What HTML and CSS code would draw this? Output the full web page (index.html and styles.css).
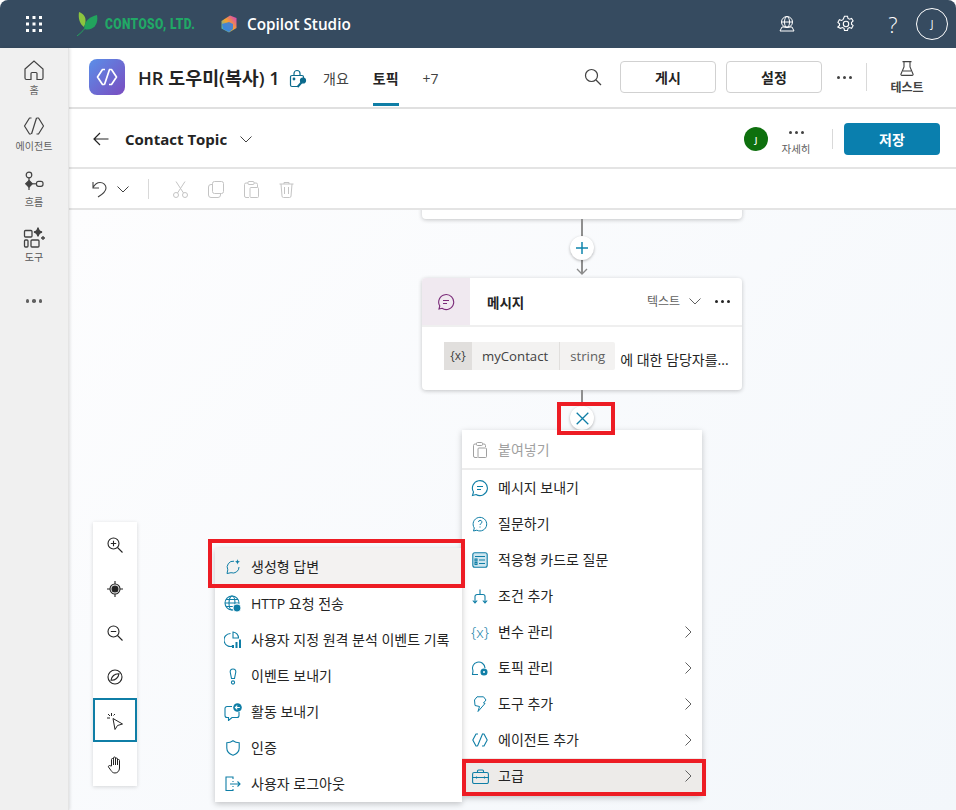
FILE: index.html
```html
<!DOCTYPE html>
<html lang="ko">
<head>
<meta charset="utf-8">
<title>Copilot Studio</title>
<link rel="stylesheet" href="styles.css">
</head>
<body>
<div class="app">
  <header class="topbar">
    <span class="waffle"><svg width="18" height="18" viewBox="0 0 18 18" fill="#fff"><rect x="1" y="1" width="3" height="3"/><rect x="7.5" y="1" width="3" height="3"/><rect x="14" y="1" width="3" height="3"/><rect x="1" y="7.5" width="3" height="3"/><rect x="7.5" y="7.5" width="3" height="3"/><rect x="14" y="7.5" width="3" height="3"/><rect x="1" y="14" width="3" height="3"/><rect x="7.5" y="14" width="3" height="3"/><rect x="14" y="14" width="3" height="3"/></svg></span>
    <span class="brand">
      <svg width="21" height="24" viewBox="0 0 21 24"><path d="M2 0c5 2 7 5 6.500 10-.2 2-.8 3.500-1.500 5C3 12 1 7 2 0z" fill="#8cc63f"/><path d="M20 3c1.500 8-2 14-9.500 14.500-2 .1-3-.5-3.300-2C8 8 13 5 20 3z" fill="#22a45d"/><path d="M0 24c4-3 8-7 12-13" stroke="#22a45d" stroke-width="1" fill="none"/></svg>
      <span class="brand-name">CONTOSO, LTD.</span>
    </span>
    <span class="product">
      <svg width="18" height="18" viewBox="0 0 18 18"><defs><linearGradient id="cs" x1="0" y1="1" x2="1" y2="0"><stop offset="0" stop-color="#19c3d6"/><stop offset=".5" stop-color="#f7a32b"/><stop offset="1" stop-color="#d23bc8"/></linearGradient></defs><path d="M10 .5l6.500 2.500v10l-7.500 4.500-7.500-4V6z" fill="url(#cs)"/><path d="M2 9l7-2 4 2v5l-4 3-6-3z" fill="#2f7fe6" opacity=".85"/></svg>
      <span class="product-name">Copilot Studio</span>
    </span>
    <span class="spacer"></span>
    <span class="top-icons">
      <svg class="ico-env" width="18" height="18" viewBox="0 0 18 18" fill="none" stroke="#fff" stroke-width="1"><circle cx="9" cy="7" r="5.500"/><ellipse cx="9" cy="7" rx="2.500" ry="5.500"/><path d="M3.500 7h11M2 16l2-4h10l2 4z"/></svg>
      <svg class="ico-gear" width="18" height="18" viewBox="0 0 18 18" fill="none" stroke="#fff" stroke-width="1.100"><circle cx="9" cy="9" r="2.700"/><path d="M7.500 1.200h3l.5 2.200 1.500.8 2.100-.8 1.500 2.600-1.600 1.500v1.700l1.600 1.500-1.500 2.600-2.100-.8-1.500.8-.5 2.200h-3l-.5-2.200-1.500-.8-2.100.8L.9 12l1.600-1.500V8.800L.9 7.300l1.500-2.600 2.100.8 1.500-.8z"/></svg>
      <span class="help">?</span>
      <span class="me">J</span>
    </span>
  </header>
  <div class="body">
    <nav class="rail">
      <a class="rail-item">
        <svg width="22" height="22" viewBox="0 0 22 22" fill="none" stroke="#424242" stroke-width="1.200"><path d="M2 10l9-8 9 8v9a1.500 1.500 0 0 1-1.500 1.500H14v-6a1 1 0 0 0-1-1H9a1 1 0 0 0-1 1v6H3.500A1.500 1.500 0 0 1 2 19z"/></svg>
        <span>홈</span>
      </a>
      <a class="rail-item">
        <svg width="22" height="22" viewBox="0 0 22 22" fill="none" stroke="#424242" stroke-width="1.200" stroke-linejoin="round"><path d="M8.500 3H6.500L1.500 11l5 8h1.500M13.500 3h2l5 8-5 8h-2M13.500 3L8.500 19"/></svg>
        <span>에이전트</span>
      </a>
      <a class="rail-item">
        <svg width="22" height="22" viewBox="0 0 22 22" fill="none" stroke="#424242" stroke-width="1.200"><circle cx="6" cy="4" r="2.800"/><path d="M6 6.800v3M6 16v3"/><path d="M6 9.500l3.300 3.300L6 16.100l-3.300-3.300z" fill="#424242"/><path d="M9.300 12.800h4.200"/><rect x="13.500" y="10.300" width="6.500" height="5" rx="2"/></svg>
        <span>흐름</span>
      </a>
      <a class="rail-item">
        <svg width="22" height="22" viewBox="0 0 22 22" fill="none" stroke="#424242" stroke-width="1.300"><rect x="1.500" y="3.500" width="7.500" height="6.500" rx="1"/><rect x="1.500" y="13" width="3.500" height="7" rx="1"/><rect x="8" y="13" width="8" height="7" rx="1"/><path d="M15 .5c.5 3 1.500 4 4 4.500-2.500.5-3.500 1.500-4 4.500-.5-3-1.500-4-4-4.500 2.500-.5 3.500-1.500 4-4.500z" fill="#424242"/><path d="M20 9v4M18 11h4"/></svg>
        <span class="tools-label">도구</span>
      </a>
      <span class="rail-more"><i></i><i></i><i></i></span>
    </nav>
    <main class="main">
      <div class="agentbar">
        <span class="agent-logo"><svg width="22" height="18" viewBox="0 0 22 18" fill="none" stroke="#fff" stroke-width="1.700" stroke-linejoin="round"><path d="M9 1.500H6.500L1.500 9l5 7.500H8.500M13 1.500h2.500L20.500 9l-5 7.500H13M13.500 1.500L8.500 16.500"/></svg></span>
        <span class="agent-name">HR 도우미(복사) 1</span>
        <svg class="lock" width="18" height="20" viewBox="0 0 18 20" fill="none" stroke="#0b6a8c" stroke-width="1.200"><path d="M5 6.500V4.500a3 3 0 0 1 6 0v2"/><path d="M9 17.500H3a1.500 1.500 0 0 1-1.500-1.500V8A1.500 1.500 0 0 1 3 6.500h10A1.500 1.500 0 0 1 14.500 8v2"/><circle cx="5" cy="10" r=".8" fill="#0b6a8c"/><circle cx="14" cy="11.500" r="2.500" fill="#0b6a8c"/><path d="M12.500 13.500L8.500 18" stroke-width="2"/></svg>
        <div class="tabs">
          <span class="tab">개요</span>
          <span class="tab tab-on">토픽</span>
          <span class="tab tab-more">+7</span>
        </div>
        <span class="spacer"></span>
        <svg class="search" width="18" height="18" viewBox="0 0 18 18" fill="none" stroke="#424242" stroke-width="1.200"><circle cx="7.500" cy="7.500" r="6"/><path d="M12 12l5 5"/></svg>
        <button class="btn">게시</button>
        <button class="btn">설정</button>
        <span class="dots dots-top"><i></i><i></i><i></i></span>
        <span class="vsep vsep-top"></span>
        <span class="testbtn">
          <svg width="14" height="15" viewBox="0 0 14 15" fill="none" stroke="#424242" stroke-width="1.100"><path d="M2.500 .6h9M4 .6v5.400L1 13a1 1 0 0 0 1 1.400h10a1 1 0 0 0 1-1.400L10 6V.6M3 10h8"/></svg>
          <span>테스트</span>
        </span>
      </div>
      <div class="topicbar">
        <svg class="back" width="16" height="14" viewBox="0 0 16 14" fill="none" stroke="#242424" stroke-width="1.200"><path d="M15.500 7H1M7 1L1 7l6 6"/></svg>
        <span class="topic-name">Contact Topic</span>
        <svg class="chev-topic" width="12" height="7" viewBox="0 0 12 7" fill="none" stroke="#424242" stroke-width="1"><path d="M.5.500L6 6 11.500.500"/></svg>
        <span class="spacer"></span>
        <span class="avatar">J</span>
        <span class="more">
          <span class="dots"><i></i><i></i><i></i></span>
          <span class="more-label">자세히</span>
        </span>
        <span class="vsep vsep-sub"></span>
        <button class="save">저장</button>
      </div>
      <div class="toolbar">
        <svg class="tb-undo" width="16" height="17" viewBox="0 0 16 17" fill="none" stroke="#424242" stroke-width="1.100"><path d="M1 1v6h6M1 6.500C3 3 5 1.500 8 1.500c3.500 0 6 2.500 6 5.500 0 3-3 6-8 9"/></svg>
        <svg class="tb-chev" width="12" height="7" viewBox="0 0 12 7" fill="none" stroke="#424242" stroke-width="1"><path d="M.5.500L6 6 11.500.500"/></svg>
        <span class="vsep vsep-tb"></span>
        <svg class="tb-off" width="15" height="17" viewBox="0 0 15 17" fill="none" stroke="#c4c4c4" stroke-width="1"><path d="M3 .500l7.500 11.500M12 .500L4.500 12"/><circle cx="3" cy="14" r="2.500"/><circle cx="12" cy="14" r="2.500"/></svg>
        <svg class="tb-off" width="16" height="17" viewBox="0 0 16 17" fill="none" stroke="#c4c4c4" stroke-width="1"><rect x="4.500" y=".5" width="11" height="12" rx="2"/><path d="M4.500 3.500H3A2.500 2.500 0 0 0 .5 6v8A2.500 2.500 0 0 0 3 16.500h7a2.500 2.500 0 0 0 2.500-2.500v-1"/></svg>
        <svg class="tb-off" width="15" height="17" viewBox="0 0 15 17" fill="none" stroke="#c4c4c4" stroke-width="1"><rect x="4" y=".5" width="6" height="3" rx="1"/><path d="M4 2H2A1.500 1.500 0 0 0 .5 3.500v11.500A1.500 1.500 0 0 0 2 16.500h3M10 2h2a1.500 1.500 0 0 1 1.500 1.500V6"/><rect x="6" y="6.500" width="8.500" height="10" rx="1"/></svg>
        <svg class="tb-off" width="15" height="17" viewBox="0 0 15 17" fill="none" stroke="#c4c4c4" stroke-width="1"><path d="M.5 3h14M5 3V1.500h5V3M2 3l1 12a1.500 1.500 0 0 0 1.500 1.500h6A1.500 1.500 0 0 0 12 15l1-12M5.500 6v7M9.500 6v7"/></svg>
      </div>
      <section class="canvas">
        <div class="node node-prev"></div>
        <span class="wire wire-a"></span>
        <svg class="arrowhead" width="12" height="8" viewBox="0 0 12 8" fill="none" stroke="#8a8a8a" stroke-width="1.300"><path d="M1 1l5 5 5-5"/></svg>
        <span class="round round-plus"><svg width="14" height="14" viewBox="0 0 14 14" fill="none" stroke="#0f85ad" stroke-width="1.500"><path d="M7 1v12M1 7h12"/></svg></span>
        <div class="node node-msg">
          <div class="node-head">
            <span class="node-ico"><svg width="18" height="18" viewBox="0 0 18 18" fill="none" stroke="#7a2a78" stroke-width="1.100"><path d="M2 16l.8-3A7.500 7.500 0 1 1 5 15.300z"/><path d="M6 7.500h6M6 10.500h4"/></svg></span>
            <span class="node-title">메시지</span>
            <span class="spacer"></span>
            <span class="node-type">텍스트</span>
            <svg class="node-chev" width="12" height="7" viewBox="0 0 12 7" fill="none" stroke="#616161" stroke-width="1"><path d="M.5.500L6 6l5.500-5.500"/></svg>
            <span class="dots dots-dark"><i></i><i></i><i></i></span>
          </div>
          <div class="node-body">
            <span class="chip"><span class="chip-x">{x}</span><span class="chip-name">myContact</span><span class="chip-type">string</span></span>
            <span class="node-text">에 대한 담당자를...</span>
          </div>
        </div>
        <span class="wire wire-b"></span>
        <span class="round round-x"><svg width="13" height="13" viewBox="0 0 13 13" fill="none" stroke="#0f7ea6" stroke-width="1.300"><path d="M.7.700l11.600 11.600M12.300.700L.7 12.300"/></svg></span>

        <div class="zoomer">
          <span class="z-item"><svg width="16" height="16" viewBox="0 0 16 16" fill="none" stroke="#242424" stroke-width="1.100"><circle cx="6.500" cy="6.500" r="5.500"/><path d="M10.500 10.500L15.500 15.500M3.800 6.500h5.400M6.500 3.800v5.400"/></svg></span>
          <span class="z-item"><svg width="16" height="16" viewBox="0 0 16 16" fill="none" stroke="#242424" stroke-width="1.100"><circle cx="8" cy="8" r="5"/><circle cx="8" cy="8" r="3" fill="#242424"/><path d="M8 0v3M8 13v3M0 8h3M13 8h3"/></svg></span>
          <span class="z-item"><svg width="16" height="16" viewBox="0 0 16 16" fill="none" stroke="#242424" stroke-width="1.100"><circle cx="6.500" cy="6.500" r="5.500"/><path d="M10.500 10.500L15.500 15.500M3.800 6.500h5.400"/></svg></span>
          <span class="z-item"><svg width="16" height="16" viewBox="0 0 16 16" fill="none" stroke="#242424" stroke-width="1.100"><circle cx="8" cy="8" r="7"/><path d="M4 11.200C4.500 7.500 7.500 4.500 12 4.800 11.500 8.500 8.500 11.500 4 11.200z"/></svg></span>
          <span class="z-item z-on"><svg width="18" height="18" viewBox="0 0 18 18" fill="none" stroke="#242424" stroke-width="1"><path d="M7 6.500l9.500 5.500-5 1.500-2.500 4z"/><path d="M5.500 1v3M1 6h3M2 2l2 2M9 2L7.500 3.500"/></svg></span>
          <span class="z-item"><svg width="16" height="18" viewBox="0 0 16 18" fill="none" stroke="#242424" stroke-width="1"><path d="M4.500 10V3.500a1 1 0 0 1 2 0V2a1 1 0 0 1 2 0v1a1 1 0 0 1 2 0v1.500a1 1 0 0 1 2 0V12c0 3-2 5-4.500 5-2 0-3-1-4-2.500L1.500 11c-.5-1 .8-2 1.700-1.200z"/><path d="M6.500 3.500V9M8.500 3v6M10.500 4v5"/></svg></span>
        </div>

        <div class="menu menu-main">
          <div class="mi mi-paste">
            <span class="mi-ico"><svg width="14" height="16" viewBox="0 0 14 16" fill="none" stroke="#a0a0a0" stroke-width="1"><rect x="3.500" y=".5" width="6" height="3" rx="1"/><path d="M3.500 2H2A1.500 1.500 0 0 0 .5 3.500V14A1.500 1.500 0 0 0 2 15.500h2.500M9.500 2H11a1.500 1.500 0 0 1 1.500 1.500V5"/><rect x="5" y="6" width="8.500" height="9.500" rx="1"/></svg></span>
            <span class="mi-text">붙여넣기</span>
          </div>
          <div class="mi">
            <span class="mi-ico"><svg width="18" height="18" viewBox="0 0 18 18" fill="none" stroke="#0f7ea6" stroke-width="1.100"><path d="M1.500 16.500l1-3.500A7.500 7.500 0 1 1 5 15.500z"/><path d="M6 7.500h6M6 10.500h4"/></svg></span>
            <span class="mi-text">메시지 보내기</span>
          </div>
          <div class="mi">
            <span class="mi-ico"><svg width="16" height="16" viewBox="0 0 16 16" fill="none" stroke="#0f7ea6" stroke-width="1"><path d="M1.500 15l.8-3A6.800 6.800 0 1 1 4.800 14.200z"/><path d="M6.500 6a1.700 1.700 0 1 1 2.400 1.600c-.6.300-.9.700-.9 1.400M8 10.500v1"/></svg></span>
            <span class="mi-text">질문하기</span>
          </div>
          <div class="mi">
            <span class="mi-ico"><svg width="16" height="16" viewBox="0 0 16 16" fill="#cfe6ef" stroke="#0f7ea6" stroke-width="1.100"><rect x=".8" y=".8" width="14.400" height="14.400" rx="2"/><path d="M3 4.500h10M7 8h6M7 11.500h6" fill="none"/><rect x="3" y="7" width="2" height="2"/><rect x="3" y="10.500" width="2" height="2"/></svg></span>
            <span class="mi-text">적응형 카드로 질문</span>
          </div>
          <div class="mi">
            <span class="mi-ico"><svg width="16" height="15" viewBox="0 0 16 15" fill="none" stroke="#0f7ea6" stroke-width="1.100"><path d="M8 .500v5M3 14V7.500a2 2 0 0 1 2-2h6a2 2 0 0 1 2 2V14M.8 11.500L3 14l2.200-2.500M10.800 11.500L13 14l2.200-2.500"/></svg></span>
            <span class="mi-text">조건 추가</span>
          </div>
          <div class="mi">
            <span class="mi-ico ico-var">{x}</span>
            <span class="mi-text">변수 관리</span>
            <svg class="mi-chev" width="7" height="12" viewBox="0 0 7 12" fill="none" stroke="#616161" stroke-width="1"><path d="M.5.500L6 6 .5 11.500"/></svg>
          </div>
          <div class="mi">
            <span class="mi-ico"><svg width="18" height="16" viewBox="0 0 18 16" fill="none" stroke="#0f7ea6" stroke-width="1.100"><path d="M7 14.500H1.500l.5-3.500A6.300 6.300 0 1 1 14 8"/><circle cx="13" cy="12" r="3" fill="#0f7ea6"/><circle cx="13" cy="12" r="1" fill="#fff" stroke="none"/></svg></span>
            <span class="mi-text">토픽 관리</span>
            <svg class="mi-chev" width="7" height="12" viewBox="0 0 7 12" fill="none" stroke="#616161" stroke-width="1"><path d="M.5.500L6 6 .5 11.500"/></svg>
          </div>
          <div class="mi">
            <span class="mi-ico"><svg width="14" height="16" viewBox="0 0 14 16" fill="none" stroke="#0f7ea6" stroke-width="1" stroke-linejoin="round"><path d="M4 .8h6.500L13 4 10.500 7l1.500.5L5 15.500l1.500-5-4.500-1L1.500 4z"/></svg></span>
            <span class="mi-text">도구 추가</span>
            <svg class="mi-chev" width="7" height="12" viewBox="0 0 7 12" fill="none" stroke="#616161" stroke-width="1"><path d="M.5.500L6 6 .5 11.500"/></svg>
          </div>
          <div class="mi">
            <span class="mi-ico"><svg width="16" height="14" viewBox="0 0 16 14" fill="none" stroke="#0f7ea6" stroke-width="1.100" stroke-linejoin="round"><path d="M6 1H4L.8 7 4 13h1.500M10 1h2l3.200 6L12 13h-2M10.500 1L5.500 13"/></svg></span>
            <span class="mi-text">에이전트 추가</span>
            <svg class="mi-chev" width="7" height="12" viewBox="0 0 7 12" fill="none" stroke="#616161" stroke-width="1"><path d="M.5.500L6 6 .5 11.500"/></svg>
          </div>
          <div class="mi mi-adv">
            <span class="mi-ico"><svg width="17" height="15" viewBox="0 0 17 15" fill="none" stroke="#0f7ea6" stroke-width="1.100"><rect x=".6" y="3.500" width="15.800" height="11" rx="1.500"/><path d="M5.500 3.500V2a1 1 0 0 1 1-1h4a1 1 0 0 1 1 1v1.500M.6 8.500h15.800M4.500 7.500v2M12.500 7.500v2"/></svg></span>
            <span class="mi-text">고급</span>
            <svg class="mi-chev" width="7" height="12" viewBox="0 0 7 12" fill="none" stroke="#616161" stroke-width="1"><path d="M.5.500L6 6 .5 11.500"/></svg>
          </div>
        </div>

        <div class="menu menu-sub">
          <div class="mi mi-gen">
            <span class="mi-ico"><svg width="16" height="16" viewBox="0 0 16 16" fill="none" stroke="#0f7ea6" stroke-width="1"><path d="M9 2.200A6 6 0 0 0 2.800 10.800L2 14.500l4-.8A6 6 0 0 0 14 8"/><path d="M12.500 0c.3 1.800 1 2.500 2.800 2.800-1.800.3-2.500 1-2.800 2.800-.3-1.800-1-2.500-2.800-2.800 1.800-.3 2.500-1 2.800-2.800z" fill="#0f7ea6" stroke="none"/></svg></span>
            <span class="mi-text">생성형 답변</span>
          </div>
          <div class="mi">
            <span class="mi-ico"><svg width="18" height="18" viewBox="0 0 18 18" fill="none" stroke="#0f7ea6" stroke-width="1.100"><circle cx="8" cy="8" r="7"/><ellipse cx="8" cy="8" rx="3" ry="7"/><path d="M1 8h14M2 4.500h12M2 11.500h12"/><circle cx="13" cy="13" r="4" fill="#0f7ea6" stroke="#fff"/></svg></span>
            <span class="mi-text">HTTP 요청 전송</span>
          </div>
          <div class="mi">
            <span class="mi-ico"><svg width="18" height="18" viewBox="0 0 18 18" fill="none" stroke="#0f7ea6" stroke-width="1.100"><path d="M6.500 2.500A6.500 6.500 0 1 0 9 15"/><path d="M9 1a6 6 0 0 1 5.500 6H9z"/><path d="M9 17v-3M12.500 17v-6M16 17V8.500" stroke-width="2"/></svg></span>
            <span class="mi-text">사용자 지정 원격 분석 이벤트 기록</span>
          </div>
          <div class="mi">
            <span class="mi-ico"><svg width="8" height="17" viewBox="0 0 8 17" fill="none" stroke="#0f7ea6" stroke-width="1.100"><path d="M4 1C2 1 1 2.200 1.200 4L2.500 10.500h3L6.800 4C7 2.200 6 1 4 1z"/><circle cx="4" cy="14.500" r="1.600"/></svg></span>
            <span class="mi-text">이벤트 보내기</span>
          </div>
          <div class="mi">
            <span class="mi-ico"><svg width="18" height="18" viewBox="0 0 18 18" fill="none" stroke="#0f7ea6" stroke-width="1.100"><path d="M8 3.500H3A2 2 0 0 0 1 5.500v7A2 2 0 0 0 3 14.500h1.500v3l3.500-3h5a2 2 0 0 0 2-2V9"/><circle cx="13.500" cy="4.500" r="4.300" fill="#0f7ea6" stroke="none"/><path d="M15.800 4.500h-4.300M13.300 2.700l-1.900 1.800 1.900 1.800" stroke="#fff"/></svg></span>
            <span class="mi-text">활동 보내기</span>
          </div>
          <div class="mi">
            <span class="mi-ico"><svg width="14" height="16" viewBox="0 0 14 16" fill="none" stroke="#0f7ea6" stroke-width="1.100"><path d="M7 .8c1.800 1.400 3.800 2 6.200 2V8c0 3.500-2.500 6-6.200 7.200C3.300 14 .8 11.500.8 8V2.800c2.400 0 4.400-.6 6.200-2z"/></svg></span>
            <span class="mi-text">인증</span>
          </div>
          <div class="mi">
            <span class="mi-ico"><svg width="16" height="16" viewBox="0 0 16 16" fill="none" stroke="#0f7ea6" stroke-width="1.100"><path d="M8 3V1H1v13.500h7V13"/><path d="M5 8h10M12.500 5.500L15 8l-2.500 2.500M8 5v1M8 10v1"/></svg></span>
            <span class="mi-text">사용자 로그아웃</span>
          </div>
        </div>

        <span class="mark mark-x"></span>
        <span class="mark mark-gen"></span>
        <span class="mark mark-adv"></span>
      </section>
    </main>
  </div>
</div>
</body>
</html>
```

FILE: styles.css
```css
* { box-sizing: border-box; }
html, body { margin: 0; height: 100%; background: #fff; overflow: hidden; }
body { font-family: "Open Sans", "Noto Sans CJK KR", sans-serif; color: #242424; }
.app { width: 956px; height: 810px; display: flex; flex-direction: column; overflow: hidden; background: #fff; }
.spacer { flex: 1; }
svg { display: block; flex: none; }

.topbar { height: 48px; flex: none; background: #364b60; border-radius: 8px 8px 0 0; display: flex; align-items: center; color: #fff; }
.waffle { width: 68px; display: flex; justify-content: center; }
.brand { display: flex; align-items: center; margin-left: 9px; gap: 7px; width: 118px; }
.brand-name { font-family: "Roboto", sans-serif; font-weight: 900; font-size: 15px; letter-spacing: .5px; color: #21a866; white-space: nowrap; transform: scaleX(.8); transform-origin: left center; }
.product { display: flex; align-items: center; margin-left: 25px; gap: 9px; }
.product-name { font-size: 15.300px; font-weight: 600; color: #fff; }
.top-icons { display: flex; align-items: center; }
.ico-env { margin-right: 41px; }
.ico-gear { margin-right: 32px; }
.help { font-size: 22px; font-weight: 300; width: 14px; text-align: center; margin-right: 16px; margin-left: -1px; }
.me { width: 32px; height: 32px; border: 1px solid #fff; border-radius: 50%; display: flex; align-items: center; justify-content: center; font-size: 10px; margin-right: 8px; }

.body { flex: 1; display: flex; min-height: 0; }
.rail { width: 69px; flex: none; background: #f0f0f0; box-shadow: 1px 0 3px rgba(0,0,0,.12); border-right: 1px solid #e4e4e4; display: flex; flex-direction: column; align-items: center; padding-top: 11px; position: relative; z-index: 2; }
.rail-item { height: 56px; display: flex; flex-direction: column; align-items: center; gap: 2px; font-size: 10px; color: #616161; }
.rail-item span { line-height: 14px; }
.tools-label { color: #555; margin-top: -1px; }
.rail-more { display: flex; gap: 3px; margin-top: 16px; }
.rail-more i { width: 3.500px; height: 3.500px; border-radius: 50%; background: #616161; }

.main { flex: 1; min-width: 0; display: flex; flex-direction: column; }
.agentbar { height: 61px; flex: none; border-bottom: 2px solid #e0e0e0; display: flex; align-items: center; padding-left: 20px; padding-bottom: 1px; }
.agent-logo { width: 36px; height: 36px; border-radius: 8px; background: linear-gradient(135deg, #5b8fe8, #7a4cc0); display: flex; align-items: center; justify-content: center; }
.agent-name { font-size: 18.400px; font-weight: 600; margin-left: 13px; white-space: nowrap; width: 141px; }
.lock { margin-left: 10px; margin-top: 4px; }
.tabs { display: flex; align-self: stretch; margin-left: 16px; gap: 24px; }
.tab { font-size: 14px; color: #424242; display: flex; align-items: center; padding-top: 2px; height: 58px; }
.tab-on { font-weight: 700; color: #242424; border-bottom: 3px solid #0f7ea6; padding-top: 5px; }
.search { margin-right: 18px; margin-top: -1px; }
.btn { width: 96px; height: 32px; margin-right: 10px; background: #fff; border: 1px solid #d1d1d1; border-radius: 4px; font: 700 14px "Open Sans", "Noto Sans CJK KR", sans-serif; color: #242424; padding: 0; }
.dots { display: flex; gap: 3px; }
.dots i { width: 3px; height: 3px; border-radius: 50%; background: #424242; }
.dots-top { margin: 0 14px 0 5px; }
.vsep { width: 1px; background: #d9d9d9; flex: none; }
.vsep-top { height: 28px; margin-right: 23px; }
.testbtn { display: flex; flex-direction: column; align-items: center; font-size: 12px; font-weight: 700; color: #424242; margin-right: 32px; gap: 3px; width: 34px; padding-top: 2px; }
.testbtn span { line-height: 17px; white-space: nowrap; }

.topicbar { height: 60px; flex: none; border-bottom: 2px solid #e4e4e4; display: flex; align-items: center; padding: 2px 16px 0 24px; }
.topic-name { font-size: 15px; font-weight: 700; margin-left: 16px; color: #242424; }
.chev-topic { margin-left: 13px; }
.avatar { width: 24px; height: 24px; border-radius: 50%; background: #0e700e; color: #fff; font-size: 9px; font-weight: 600; display: flex; align-items: center; justify-content: center; }
.more { width: 40px; margin-left: 8px; display: flex; flex-direction: column; align-items: center; gap: 8px; padding-top: 9px; }
.more-label { font-size: 10.500px; color: #616161; line-height: 15px; white-space: nowrap; }
.vsep-sub { height: 20px; margin-left: 16px; margin-right: 11px; }
.save { width: 96px; height: 32px; background: #0a7fae; color: #fff; border: 0; border-radius: 4px; font: 700 14px "Open Sans", "Noto Sans CJK KR", sans-serif; padding: 0; }

.toolbar { height: 41px; flex: none; border-bottom: 2px solid #e4e4e4; display: flex; align-items: center; padding: 1px 0 0 23px; }
.tb-chev { margin-left: 9px; }
.vsep-tb { height: 20px; margin-left: 19px; margin-right: 24px; }
.tb-off { margin-right: 20px; }

.canvas { flex: 1; position: relative; background: linear-gradient(135deg, #fdfdfe, #f3f7fb); overflow: hidden; }
.node { position: absolute; left: 353px; width: 320px; background: #fff; border-radius: 4px; box-shadow: 0 1px 4px rgba(0,0,0,.22); }
.node-prev { top: -20px; height: 29px; }
.wire { position: absolute; left: 512px; width: 2px; background: #8f8f8f; }
.wire-a { top: 9px; height: 55px; }
.wire-b { top: 180px; height: 20px; }
.arrowhead { position: absolute; left: 507px; top: 58px; }
.round { position: absolute; left: 501px; width: 24px; height: 24px; border-radius: 50%; background: #fff; box-shadow: 0 1px 3px rgba(0,0,0,.28); display: flex; align-items: center; justify-content: center; }
.round-plus { top: 26px; }
.round-x { top: 196px; }
.node-msg { top: 68px; height: 112px; }
.node-head { height: 49px; border-bottom: 2px solid #efefef; display: flex; align-items: center; padding-right: 12px; }
.node-ico { width: 48px; height: 47px; background: #f0e9f0; border-radius: 4px 0 0 0; display: flex; align-items: center; justify-content: center; }
.node-title { font-size: 13.500px; font-weight: 700; margin-left: 17px; color: #242424; }
.node-type { font-size: 12px; color: #616161; padding-bottom: 2px; }
.node-chev { margin-left: 9px; margin-right: 14px; }
.dots-dark i { background: #242424; }
.node-body { display: flex; align-items: flex-start; padding: 15px 0 0 22px; }
.chip { display: flex; height: 28px; background: #f3f2f1; border-radius: 2px; font-size: 13.200px; line-height: 28px; color: #424242; }
.chip-x { width: 28px; text-align: center; background: #e1dfdd; font-size: 12px; }
.chip-name { padding: 0 11px 0 10px; border-right: 1px solid #e1dfdd; }
.chip-type { padding: 0 10px; color: #616161; }
.node-text { font-size: 14px; line-height: 18px; color: #242424; margin-left: 5px; margin-top: 9px; white-space: nowrap; }

.zoomer { position: absolute; left: 24px; top: 312px; width: 44px; background: #fff; box-shadow: 0 1px 4px rgba(0,0,0,.15); display: flex; flex-direction: column; }
.z-item { height: 44px; display: flex; align-items: center; justify-content: center; padding-top: 2px; }
.z-on { outline: 2px solid #0f7ea6; outline-offset: -2px; }

.menu { position: absolute; background: #fff; box-shadow: 0 2px 6px rgba(0,0,0,.22); }
.menu-main { left: 393px; top: 220px; width: 240px; padding-top: 2px; height: 366px; }
.menu-sub { left: 146px; top: 338px; width: 247px; padding-top: 0; height: 254px; z-index: 2; }
.mi { height: 36px; display: flex; align-items: center; font-size: 14px; color: #242424; padding-left: 9px; padding-right: 10px; white-space: nowrap; }
.mi-ico { width: 18px; height: 18px; display: flex; align-items: center; justify-content: center; color: #0f7ea6; flex: none; }
.mi-text { margin-left: 9px; flex: 1; padding-bottom: 2px; }
.mi-chev { flex: none; }
.mi-paste { height: 38px; border-bottom: 2px solid #ececec; color: #a0a0a0; }
.mi-adv { background: #edebe9; }
.mi-gen { background: #f3f2f1; }
.menu-sub .mi-gen { height: 38px; }
.ico-var { font-size: 15px; font-weight: 300; white-space: nowrap; }

.mark { position: absolute; border: 4px solid #ed1c24; z-index: 3; pointer-events: none; }
.mark-x { left: 488px; top: 192px; width: 58px; height: 33px; }
.mark-gen { left: 139px; top: 329px; width: 257px; height: 49px; }
.mark-adv { left: 393px; top: 549px; width: 244px; height: 37px; }
```
